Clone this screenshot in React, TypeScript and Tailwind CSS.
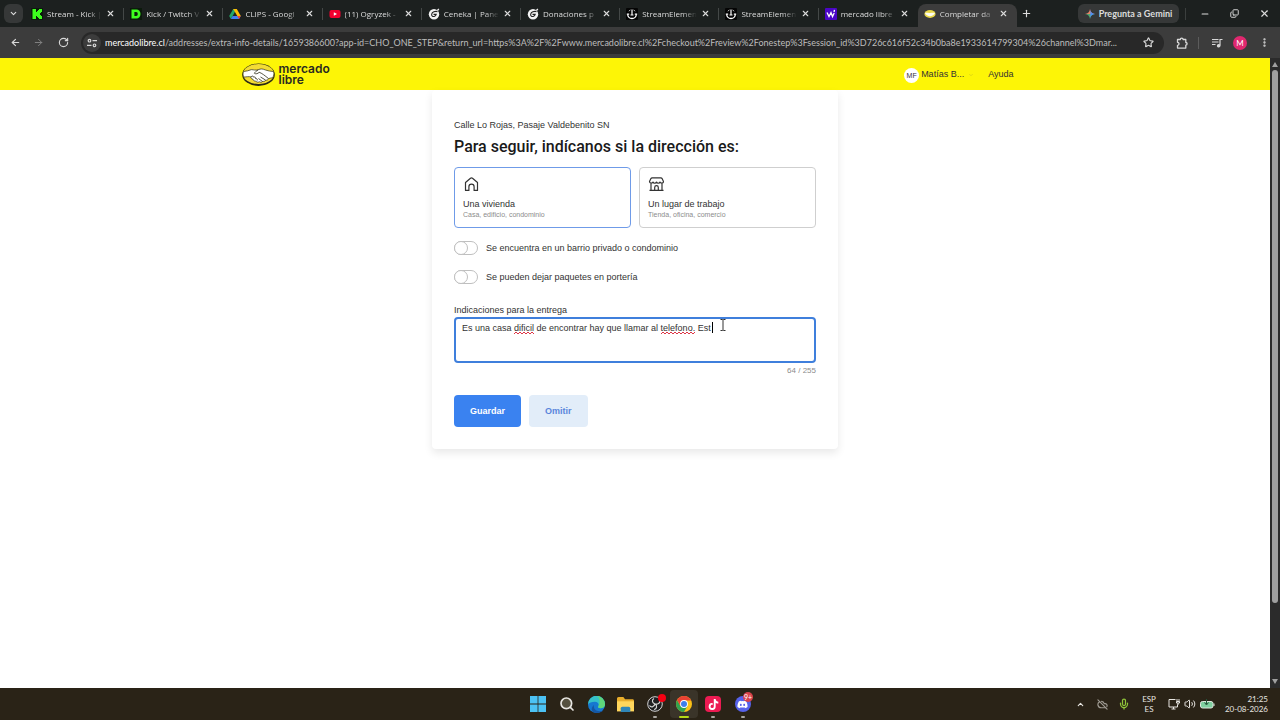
import React, { useState } from 'react';
import { ArrowLeft, ArrowRight, ChevronDown, ChevronUp, CloudOff, Copy, Mic, Minus, MoreVertical, Plus, RotateCw, Search, Star, Volume2, X } from 'lucide-react';
import { FaDiscord, FaTiktok } from 'react-icons/fa';

function KickIcon() {
  return (
    <svg viewBox="0 0 12 12" className="size-3 shrink-0">
      <rect width="12" height="12" rx="1" fill="#0b1a0b" />
      <path d="M1.500 1h3.500v3h1V3h1V2h1V1h3v3h-1v1H9v2h1v1h1v3H8v-1H7V9H6V8H5v3H1.500z" fill="#3dfc1e" />
    </svg>
  );
}

function DIcon() {
  return (
    <svg viewBox="0 0 12 12" className="size-3 shrink-0">
      <rect width="12" height="12" fill="#0b1a0b" />
      <path fillRule="evenodd" d="M1.500 1.500h5a4 4.500 0 0 1 0 9h-5zM4.400 4v4h1.800a1.600 2 0 0 0 0-4z" fill="#3dfc1e" />
    </svg>
  );
}

function DriveIcon() {
  return (
    <svg viewBox="0 0 12 12" className="size-3 shrink-0">
      <path d="M4.200 1h3.400L3.600 8l-1.800 3L.2 8z" fill="#23a566" />
      <path d="M4.200 1h3.600l4 7H8.300z" fill="#fbbc05" />
      <path d="M3.600 8h8.200L10 11H1.800z" fill="#3f7df0" />
      <path d="M11.800 8 10 11 8.300 8z" fill="#ea4335" />
    </svg>
  );
}

function YoutubeIcon() {
  return (
    <svg viewBox="0 0 12 12" className="size-3 shrink-0">
      <rect x="0.500" y="2" width="11" height="8" rx="2" fill="#f4002f" />
      <path d="m4.800 4.200 3.200 1.800-3.200 1.800z" fill="#fff" />
    </svg>
  );
}

function CenekaIcon() {
  return (
    <svg viewBox="0 0 12 12" className="size-3 shrink-0">
      <circle cx="6" cy="6.300" r="5.200" fill="#f4f4f4" />
      <path d="M9.500 3.600C7 3 4.200 4 3.700 6.200c-.4 1.800 1 2.600 2.500 2.300 1.100-.3 1.800-1 2-2.100H5.500" fill="none" stroke="#222" strokeWidth="1.100" />
      <path d="M9.500 2.500 10.800.8" stroke="#f4f4f4" strokeWidth="1.300" />
    </svg>
  );
}

function StreamElementsIcon() {
  return (
    <svg viewBox="0 0 12 12" className="size-3 shrink-0">
      <rect width="12" height="12" rx="1" fill="#050505" />
      <path d="M1.700 6.200c0 2.600 2 4.300 4.300 4.300s4.300-1.700 4.300-4.300" fill="none" stroke="#fff" strokeWidth="1.300" />
      <path d="M6 1.500v5.500M4.500 7h3M.8 6.200h2.400M8.800 6.200h2.400" stroke="#fff" strokeWidth="1.200" />
      <path d="M3 3.200A4.300 4.300 0 0 1 4.300 2M7.700 2A4.300 4.300 0 0 1 9 3.200" fill="none" stroke="#fff" />
    </svg>
  );
}

function YahooIcon() {
  return (
    <svg viewBox="0 0 12 12" className="size-3 shrink-0">
      <rect width="12" height="12" rx="1" fill="#4b06c6" />
      <path d="M2 4.500 4 8.500l2-4 1.500 4 1.700-3.500M9.500 1.800 9 4" fill="none" stroke="#fff" strokeWidth="1.300" />
    </svg>
  );
}

function MeliIcon() {
  return (
    <svg viewBox="0 0 12 12" className="size-3 shrink-0">
      <ellipse cx="6" cy="6" rx="5.600" ry="3.900" fill="#e9d94a" />
      <path d="M1 5c2-.5 3 .3 5 0s3-.6 5 0c-.6 1.800-3 3.200-5 3.200S1.500 7 1 5z" fill="#fdfdf2" />
    </svg>
  );
}

const tabs = [
  { title: 'Stream - Kick |', icon: <KickIcon /> },
  { title: 'Kick / Twitch V', icon: <DIcon /> },
  { title: 'CLIPS - Googl', icon: <DriveIcon /> },
  { title: '(11) Ogryzek -', icon: <YoutubeIcon /> },
  { title: 'Ceneka | Panel', icon: <CenekaIcon /> },
  { title: 'Donaciones p', icon: <CenekaIcon /> },
  { title: 'StreamElemen', icon: <StreamElementsIcon /> },
  { title: 'StreamElemen', icon: <StreamElementsIcon /> },
  { title: 'mercado libre', icon: <YahooIcon /> },
  { title: 'Completar da', icon: <MeliIcon />, active: true },
];

function TabStrip() {
  return (
    <div className="flex h-[27px] items-center bg-[#1c201f] text-[#dcdcdc]">
      <button aria-label="Buscar pestañas" className="ml-1 flex h-[19px] w-[19px] shrink-0 items-center justify-center rounded-md bg-[#363838]">
        <ChevronDown size={9} strokeWidth={3} />
      </button>
      <div className="ml-0.5 flex w-[992px] min-w-0 self-stretch pt-1">
        {tabs.map((tab, i) => (
          <div
            key={i}
            className={`flex min-w-0 flex-1 items-center rounded-t-lg pl-1.5 ${tab.active ? 'bg-[#3c3c3c]' : ''}`}
          >
            <a href="#" className="flex min-w-0 flex-1 items-center gap-1 pb-1">
              {tab.icon}
              <span className="min-w-0 flex-1 overflow-hidden font-['Open_Sans',sans-serif] text-[8px] leading-3 whitespace-nowrap [mask-image:linear-gradient(to_right,black_75%,transparent)]">
                {tab.title}
              </span>
            </a>
            <button aria-label="Cerrar pestaña" className="mr-2 mb-1 ml-1 shrink-0">
              <X size={9} strokeWidth={3} />
            </button>
            <span className={`mb-1 h-3 w-px shrink-0 ${i < 8 ? 'bg-[#444847]' : ''}`} />
          </div>
        ))}
      </div>
      <button aria-label="Nueva pestaña" className="ml-1 shrink-0">
        <Plus size={11} strokeWidth={2.5} />
      </button>
      <button className="ml-auto flex h-[19px] w-[101px] shrink-0 items-center justify-center gap-1 rounded-md bg-[#363838] text-[9px] font-bold whitespace-nowrap">
        <svg viewBox="0 0 10 10" className="size-2.5">
          <path d="M5 0c.4 3 2 4.600 5 5H0c3-.4 4.600-2 5-5z" fill="#e9866a" />
          <path d="M5 10C4.600 7 3 5.400 0 5h10C7 5.400 5.400 7 5 10z" fill="#4fa873" />
          <path d="M5 0c.4 3 2 4.600 5 5-3 .4-4.600 2-5 5 .5-3 .5-7 0-10z" fill="#4a8df8" />
        </svg>
        Pregunta a Gemini
      </button>
      <span className="ml-1.5 h-3 w-px bg-[#3b3f3e]" />
      <div className="ml-3.5 flex shrink-0 items-center gap-5 pr-2.5">
        <button aria-label="Minimizar"><Minus size={10} strokeWidth={2.5} /></button>
        <button aria-label="Restaurar"><Copy size={9} strokeWidth={2.5} className="-scale-x-100 rotate-180" /></button>
        <button aria-label="Cerrar"><X size={11} strokeWidth={2.5} /></button>
      </div>
    </div>
  );
}

function Toolbar() {
  return (
    <div className="flex h-[31px] items-center bg-[#3c3c3c] text-[#d8d8d8]">
      <button aria-label="Atrás" className="ml-2.5 shrink-0"><ArrowLeft size={11} strokeWidth={2.5} /></button>
      <button aria-label="Adelante" className="ml-3 shrink-0 text-[#858585]"><ArrowRight size={11} /></button>
      <button aria-label="Recargar" className="ml-3.5 shrink-0"><RotateCw size={11} strokeWidth={2.5} /></button>
      <div className="ml-3 flex h-[22px] min-w-0 flex-1 items-center rounded-full bg-[#282828] pr-2.5 pl-0.5">
        <button aria-label="Información del sitio" className="flex size-[18px] shrink-0 items-center justify-center rounded-full bg-[#3c3c3c]">
          <svg viewBox="0 0 10 10" className="size-2.5" fill="none" stroke="currentColor" strokeWidth="1.200">
            <circle cx="2.500" cy="2.700" r="1.300" />
            <path d="M5.500 2.700H10M0 7.300h4.500" />
            <circle cx="7.500" cy="7.300" r="1.300" />
          </svg>
        </button>
        <p className="ml-1 min-w-0 flex-1 truncate text-[9px] leading-4 text-[#bdbdbd]">
          <span className="text-white">mercadolibre.cl</span>
          /addresses/extra-info-details/1659386600?app-id=CHO_ONE_STEP&amp;return_url=https%3A%2F%2Fwww.mercadolibre.cl%2Fcheckout%2Freview%2Fonestep%3Fsession_id%3D726c616f52c34b0ba8e1933614799304%26channel%3Dmar...
        </p>
        <button aria-label="Agregar a favoritos" className="shrink-0"><Star size={11} strokeWidth={2.5} /></button>
      </div>
      <div className="flex shrink-0 items-center pr-2.5 pl-3">
        <button aria-label="Extensiones">
          <svg viewBox="0 0 12 12" className="size-3" fill="none" stroke="currentColor" strokeWidth="1.300" strokeLinejoin="round">
            <path d="M1.500 2.500h2.800a1.400 1.400 0 0 1 2.800 0h2.700v3a1.300 1.300 0 0 1 0 2.600v3H1.500V8.300a1.500 1.500 0 0 0 0-3z" />
          </svg>
        </button>
        <span className="ml-2.5 h-3 w-px bg-[#5c5c5c]" />
        <button aria-label="Control multimedia" className="ml-3">
          <svg viewBox="0 0 12 12" className="size-3" fill="none" stroke="currentColor" strokeWidth="1.200">
            <path d="M1 2.500h6.500M1 5h6.500M1 7.500h3.500M9 8.500V2.500h2.500" />
            <circle cx="7.700" cy="8.700" r="1.200" fill="currentColor" />
          </svg>
        </button>
        <button className="ml-2.5 flex size-[14px] items-center justify-center rounded-full bg-[#e0286f] text-[8px] leading-none text-white">M</button>
        <button aria-label="Menú" className="ml-3"><MoreVertical size={11} strokeWidth={3} /></button>
      </div>
    </div>
  );
}

function Logo() {
  return (
    <a href="#" className="flex items-center gap-1 text-[#2a2a20]">
      <svg viewBox="0 0 33 23" className="h-[23px] w-[33px]">
        <ellipse cx="16.500" cy="11.700" rx="16.300" ry="11.200" fill="#2b2a14" />
        <ellipse cx="16.500" cy="11" rx="15.600" ry="10" fill="#f3dc35" />
        <path d="M1.500 8.500C4 8.300 7 7.600 9.500 6.600c2.300.3 4.200.8 6.500.2 3-1.300 4.500-1 7.500.2 2.700.9 5 1.400 8 1.500.8 2.600.2 4.600-1 6.300-1.500.2-2.800.3-4 .8-.5 1.400-1.500 1.700-2.800 1.500-.6 1.200-1.700 1.500-3 1.200-.8 1.200-2 1.200-3.200.5-1.500.6-3 .5-3.800-.8-1.600.2-2.500-.6-2.700-1.800-1.700-.2-2.400-1.200-2-2.300C7 13.500 4.500 13.600 2 14.200.9 12.300.8 10.600 1.500 8.500z" fill="#fff" stroke="#2b2a14" strokeWidth=".7" />
        <path d="M16 7c-1.700 1-3 2-3.600 3.300 1.400 1 3.500.4 4.700-1 2.500.6 6 3.500 9.300 6.200M18.500 14l5 3M16.500 15.500l4 3M9 14c1-1.300 2.400-1.200 2.600.2 1.300-.6 2.300.2 2 1.400 1.300-.2 2 .6 1.600 1.900" fill="none" stroke="#2b2a14" strokeWidth=".8" />
      </svg>
      <span className="font-['Inter',sans-serif] text-[12px] leading-[11px] font-semibold">
        <span className="block">mercado</span>
        <span className="block">libre</span>
      </span>
    </a>
  );
}

function Header() {
  return (
    <header className="h-8 bg-[#fdf506]">
      <div className="mx-auto flex h-full max-w-[787px] items-center pr-[15px] text-[9px] text-[#333333]">
        <Logo />
        <a href="#" className="ml-auto flex items-center gap-0.5 pt-0.5">
          <span className="flex size-[15px] items-center justify-center rounded-full bg-white text-[7px] leading-none">MF</span>
          Matías B...
          <ChevronDown size={6} className="ml-0.5 text-[#c4bc20]" />
        </a>
        <a href="#" className="ml-3.5 pt-0.5">Ayuda</a>
      </div>
    </header>
  );
}

function HomeIcon() {
  return (
    <svg viewBox="0 0 16 16" className="size-4" fill="none" stroke="#333" strokeWidth="1.200" strokeLinejoin="round">
      <path d="M2.500 6.500 7.500 2.200q1-.8 2 0l5 4.300V14.400h-3.400V10.800a2.600 2.600 0 0 0-5.200 0v3.600H2.500z" />
    </svg>
  );
}

function ShopIcon() {
  return (
    <svg viewBox="0 0 16 16" className="size-4" fill="none" stroke="#333" strokeWidth="1.200" strokeLinejoin="round">
      <path d="M4.200 1.800h8.600q1 0 1.400.9l1.300 2.800a1.800 1.600 0 0 1-3.500.5 1.800 1.600 0 0 1-3.500 0 1.800 1.600 0 0 1-3.500 0 1.800 1.600 0 0 1-3.500-.5l1.300-2.800q.4-.9 1.400-.9z" />
      <path d="M3 7.500v6.900h11V7.500M1.500 14.400h14M6.700 14.400V11.400a1.800 1.800 0 0 1 3.600 0v3" />
    </svg>
  );
}

const places = [
  { id: 'home', label: 'Una vivienda', hint: 'Casa, edificio, condominio', icon: <HomeIcon /> },
  { id: 'work', label: 'Un lugar de trabajo', hint: 'Tienda, oficina, comercio', icon: <ShopIcon /> },
];

function Toggle({ label }: { label: string }) {
  return (
    <label className="flex w-fit items-center gap-2">
      <input
        type="checkbox"
        className="h-[14px] w-6 appearance-none rounded-full border border-[#bfbfbf] bg-white before:-mt-px before:-ml-px before:block before:size-[14px] before:rounded-full before:border before:border-[#bfbfbf] before:bg-white before:content-[''] checked:border-[#3483fa] checked:before:ml-[9px]"
      />
      {label}
    </label>
  );
}

function Squiggle({ width }: { width: number }) {
  const points = [];
  for (let x = 0; x <= width; x += 2) points.push(`${x},${x % 4 === 0 ? 3 : 1}`);
  return (
    <svg width={width} height="4" fill="none" stroke="#dc3545" strokeWidth="1">
      <polyline points={points.join(' ')} />
    </svg>
  );
}

function AddressForm() {
  const [place, setPlace] = useState('home');
  const [notes, setNotes] = useState('Es una casa dificil de encontrar hay que llamar al telefono. Est');

  return (
    <form className="mx-auto max-w-[406px] rounded-sm bg-white px-[22px] pt-[29px] pb-[22px] text-[9px] leading-3 text-[#333333] shadow-[0_4px_8px_rgba(0,0,0,0.09)]">
      <p>Calle Lo Rojas, Pasaje Valdebenito SN</p>
      <h1 className="mt-1.5 font-['Roboto',sans-serif] text-[16px] leading-5 font-medium text-[#1a1a1a]">
        Para seguir, indícanos si la dirección es:
      </h1>

      <div className="mt-2.5 grid grid-cols-2 gap-2">
        {places.map((p) => (
          <label
            key={p.id}
            className={`h-[61px] rounded border px-2 pt-2 ${place === p.id ? 'border-[#6f9be8]' : 'border-[#cfcfcf]'}`}
          >
            <input
              type="radio"
              name="place"
              value={p.id}
              checked={place === p.id}
              onChange={() => setPlace(p.id)}
              className="sr-only"
            />
            {p.icon}
            <span className="mt-1.5 block leading-3">{p.label}</span>
            <span className="block text-[7px] leading-[9px] text-[#8c8c8c]">{p.hint}</span>
          </label>
        ))}
      </div>

      <div className="mt-[13px] space-y-[15px]">
        <Toggle label="Se encuentra en un barrio privado o condominio" />
        <Toggle label="Se pueden dejar paquetes en portería" />
      </div>

      <label htmlFor="notes" className="mt-5 block">Indicaciones para la entrega</label>
      <div className="relative mt-px">
        <textarea
          id="notes"
          spellCheck={false}
          maxLength={255}
          value={notes}
          onChange={(e) => setNotes(e.target.value)}
          className="block h-[46px] w-full resize-none rounded border-2 border-[#3f7fdc] bg-white px-1.5 py-[3px] outline-none"
        />
        <div className="pointer-events-none absolute top-3.5 left-[60px]"><Squiggle width={20} /></div>
        <div className="pointer-events-none absolute top-3.5 left-[207px]"><Squiggle width={34} /></div>
        <span className="pointer-events-none absolute top-[5px] left-[258px] h-[11px] w-px bg-black" />
        <svg viewBox="0 0 6 12" className="pointer-events-none absolute top-0.5 left-[266px] h-3 w-1.5" fill="none" stroke="#333">
          <path d="M.5.500h2l.5.500.5-.5h2M3 1v10M.5 11.500h2l.5-.5.5.500h2" />
        </svg>
      </div>
      <p className="mt-0.5 text-right text-[8px] text-[#8c8c8c]">64 / 255</p>

      <div className="mt-[18px] flex gap-2 font-bold">
        <button type="submit" className="h-8 rounded bg-[#3a82f0] px-4 text-white">Guardar</button>
        <button type="button" className="h-8 rounded bg-[#e2edf9] px-4 text-[#5a85dc]">Omitir</button>
      </div>
    </form>
  );
}

function Scrollbar() {
  return (
    <div className="flex w-2.5 shrink-0 flex-col items-center bg-[#2b2b2b] py-1">
      <svg viewBox="0 0 6 5" className="h-[5px] w-1.5" fill="#a0a0a0"><path d="m3 0 3 5H0z" /></svg>
      <span className="mt-[3px] w-1.5 grow-[7] rounded-full bg-[#9f9f9f]" />
      <span className="grow" />
      <svg viewBox="0 0 6 5" className="h-[5px] w-1.5" fill="#a0a0a0"><path d="m3 5 3-5H0z" /></svg>
    </div>
  );
}

function Taskbar() {
  return (
    <footer className="grid h-8 grid-cols-[1fr_auto_1fr] items-center bg-[#2a2317] text-[#e8e6e2]">
      <span />
      <div className="flex items-center">
        <button aria-label="Inicio" className="flex h-7 w-[29px] items-center justify-center">
          <svg viewBox="0 0 16 16" className="size-4" fill="#4cc2f4">
            <path d="M0 0h7.600v7.600H0zM8.400 0H16v7.600H8.400zM0 8.400h7.600V16H0zM8.400 8.400H16V16H8.400z" />
          </svg>
        </button>
        <button aria-label="Buscar" className="flex h-7 w-[30px] items-center justify-center">
          <Search size={16} strokeWidth={2.5} fill="#55503f" />
        </button>
        <button aria-label="Edge" className="flex h-7 w-[29px] items-center justify-center">
          <svg viewBox="0 0 16 16" className="size-[17px]">
            <circle cx="8" cy="8" r="8" fill="#1678d0" />
            <path d="M0 8a8 8 0 0 1 16-.5c.2 2.800-2 4-4.300 4-1.700 0-2.700-.8-2-1.700C10.700 8 9.500 5.500 6.500 5.500 3.500 5.500.8 6.500 0 8z" fill="#35c1c9" />
            <path d="M8.500 0A8 8 0 0 1 16 7.500c.2 2.800-2 4-4.300 4-1.700 0-2.700-.8-2-1.700C11 7 12 3 8.500 0z" fill="#5fd67a" />
            <path d="M5.500 8.500c-.6 4 2.500 6.300 6.500 5.800 1.200-.2 2-.7 2.600-1.200-1.600 2-4 2.900-6.600 2.900C4 16 1.500 12.500 5.500 8.500z" fill="#1556a3" />
          </svg>
        </button>
        <button aria-label="Explorador de archivos" className="flex h-7 w-[29px] items-center justify-center">
          <svg viewBox="0 0 16 16" className="size-[17px]">
            <path d="M0 2.500C0 1.700.6 1 1.500 1H6l1.600 2h7c.8 0 1.400.6 1.400 1.400V14H0z" fill="#e9ae2c" />
            <path d="M0 5h16v9.500H0z" fill="#ffd65c" />
            <path d="M3.500 15v-3.500c0-.8.600-1.500 1.500-1.500h6c.9 0 1.500.7 1.500 1.500V15z" fill="#2f86b8" />
          </svg>
        </button>
        <button aria-label="OBS Studio" className="relative flex h-7 w-[30px] items-center justify-center">
          <svg viewBox="0 0 16 16" className="size-4">
            <circle cx="8" cy="8" r="7.300" fill="#1e1e20" stroke="#d6d6d6" strokeWidth="1" />
            <path d="M7 2.500C4.500 4 5 7 8 8c3 .6 5-1 5-3M8 8c-1 3-4 4-5.500 1.500M8 8c2.500 1.500 2 5-1 5.500" fill="none" stroke="#d6d6d6" strokeWidth="1.200" />
          </svg>
          <span className="absolute top-1 right-1 size-2 rounded-full bg-[#f40012]" />
          <span className="absolute bottom-0 left-[13px] h-0.5 w-1 rounded-full bg-[#a9a6a0]" />
        </button>
        <button aria-label="Chrome" className="relative flex h-7 w-[28px] items-center justify-center rounded bg-[#3a3429]">
          <svg viewBox="0 0 16 16" className="size-4">
            <circle cx="8" cy="8" r="8" fill="#fbc116" />
            <path d="M1.100 4A8 8 0 0 0 8 16l3.500-6H4.500z" fill="#31a350" />
            <path d="M8 4.400h7.100A8 8 0 0 0 1.100 4l3.400 6z" fill="#e94234" />
            <circle cx="8" cy="8" r="3.900" fill="#fff" />
            <circle cx="8" cy="8" r="3" fill="#3e7eea" />
          </svg>
          <span className="absolute bottom-0 left-[9px] h-0.5 w-2.5 rounded-full bg-[#b5d916]" />
        </button>
        <button aria-label="TikTok" className="relative flex h-7 w-[30px] items-center justify-center">
          <span className="flex size-4 items-center justify-center rounded-sm bg-[#ec1b52] text-white"><FaTiktok size={11} /></span>
          <span className="absolute bottom-0 left-[13px] h-0.5 w-1 rounded-full bg-[#a9a6a0]" />
        </button>
        <button aria-label="Discord" className="relative flex h-7 w-[29px] items-center justify-center">
          <span className="flex size-4 items-center justify-center rounded-full bg-[#5662ea] text-white"><FaDiscord size={11} /></span>
          <span className="absolute top-0.5 right-1 flex size-[10px] items-center justify-center rounded-full bg-[#d8424b] text-[7px] leading-none text-white">9+</span>
          <span className="absolute bottom-0 left-[13px] h-0.5 w-1 rounded-full bg-[#a9a6a0]" />
        </button>
      </div>

      <div className="flex items-center justify-end pr-3 text-[8px] leading-[10px]">
        <ChevronUp size={9} strokeWidth={3} />
        <CloudOff size={11} strokeWidth={2.5} className="ml-3 text-[#a09c94]" />
        <Mic size={12} strokeWidth={2.5} className="ml-2.5 text-[#8fc43a]" />
        <p className="ml-3 text-center">
          ESP
          <br />
          ES
        </p>
        <svg viewBox="0 0 12 12" className="ml-3 size-3" fill="none" stroke="currentColor">
          <path d="M7.500 1.500H1v7.500h8.500V6.500M3.500 11h4M5.500 9v2M9 1v2.500M11 1v2.500M8.500 3.500h3v1.500h-3zM10 5v2" />
        </svg>
        <Volume2 size={12} className="ml-1" />
        <svg viewBox="0 0 15 10" className="ml-1 h-2.5 w-[15px]">
          <rect x=".5" y="2.500" width="12.500" height="6.500" rx="2" fill="#7fd0a0" stroke="#dfe8e0" />
          <path d="M14 4.500v2.500" stroke="#dfe8e0" />
          <path d="M6.500 0v5M4.500 3.500l2 2.500 2-2.500" fill="none" stroke="#24523a" />
        </svg>
        <p className="ml-2.5 text-right">
          21:25
          <br />
          20-08-2026
        </p>
      </div>
    </footer>
  );
}

export default function App() {
  return (
    <div className="flex h-screen flex-col font-['Lato',sans-serif]">
      <TabStrip />
      <Toolbar />
      <div className="flex min-h-0 flex-1">
        <div className="min-w-0 flex-1 overflow-hidden bg-white font-['Liberation_Sans',Arial,sans-serif]">
          <Header />
          <main>
            <AddressForm />
          </main>
        </div>
        <Scrollbar />
      </div>
      <Taskbar />
    </div>
  );
}
